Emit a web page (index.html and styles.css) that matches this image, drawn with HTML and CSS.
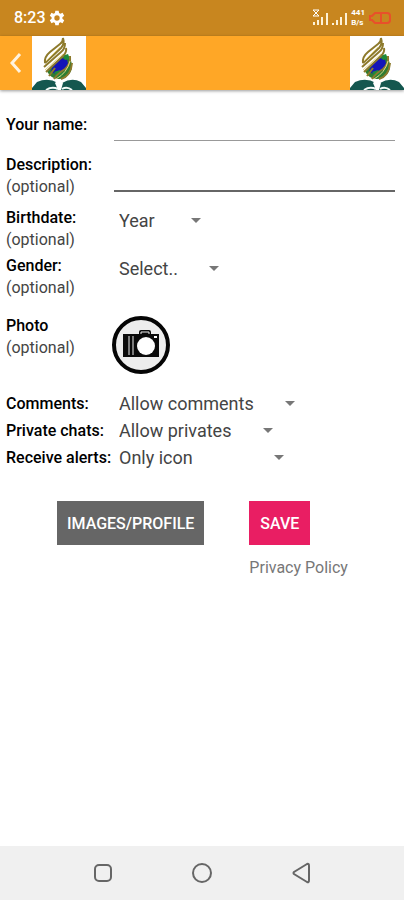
FILE: index.html
```html
<!DOCTYPE html>
<html lang="en">
<head>
    <meta charset="UTF-8">
    <meta name="viewport" content="width=device-width, initial-scale=1.0">
    <title>Profile</title>
    <link rel="stylesheet" href="styles.css">
</head>
<body>
<!-- shared logo, used on both sides of the app bar -->
<svg class="defs" width="0" height="0" aria-hidden="true">
    <symbol id="logo" viewBox="0 0 54 54">
        <rect width="54" height="54" fill="#fff"/>
        <path d="M0 52L5 46Q16 41 26 47L30 47Q40 41 49 46L54 52V54H0Z" fill="#14574f"/>
        <path d="M14 54Q20 50 26 53M40 54Q35 50 30 53" stroke="#f4faf8" stroke-width="2" fill="none"/>
        <path d="M23 47L27 43L31 47L29 54H26Z" fill="#fff"/>
        <circle cx="27" cy="30" r="13" fill="#2f7d32"/>
        <path d="M20 32L28 22L35 23L36 28L31 35L24 38L19 36Z" fill="#1414b8"/>
        <path d="M30 20L36 18L38 23L33 24ZM22 36L28 34L31 38L26 42Z" fill="#1f8a3a"/>
        <!-- flame stripes running over the globe -->
        <g fill="none" stroke="#fff" stroke-width="5">
            <path d="M13 27L31 10"/>
            <path d="M13 33L33 14"/>
        </g>
        <g fill="none" stroke="#8d7a2c" stroke-width="2">
            <path d="M13 27Q12 21 18 16L28 8Q31 6 31 2Q33 8 29 12L13 27"/>
            <path d="M12 31L29 16Q33 13 33 7"/>
            <path d="M14 36L31 20Q35 16 34 12"/>
            <path d="M17 40L23 32"/>
            <path d="M22 43Q25 38 33 33Q39 28 38 20"/>
            <path d="M29 43Q39 40 40 27"/>
        </g>
        <g fill="none" stroke="#e2d488" stroke-width="1">
            <path d="M14 25L28 11"/>
            <path d="M13 34L31 18"/>
            <path d="M24 43Q35 37 38 25"/>
        </g>
    </symbol>
</svg>

<div class="status-bar">
    <div class="clock">
        <span>8:23</span>
        <svg width="16" height="16" viewBox="0 0 24 24"><path fill="#fff" fill-rule="evenodd" d="M9.500 1h5l.6 3.400 2 1.100 3.200-1.200 2.500 4.300-2.700 2.200v2.400l2.700 2.200-2.500 4.300-3.200-1.200-2 1.100-.6 3.400h-5l-.6-3.400-2-1.100-3.200 1.200-2.500-4.300 2.700-2.200v-2.400L1.200 8.600l2.500-4.300 3.200 1.200 2-1.100zM12 8a4 4 0 1 0 0 8 4 4 0 0 0 0-8z"/></svg>
    </div>
    <div class="signals">
        <svg width="36" height="18" viewBox="0 0 36 18">
            <path d="M1 1L7 7M7 1L1 7M1 1H7M1 7H7" stroke="#fff" fill="none"/>
            <path d="M2 13V16M6 11V16M10 8V16M15 4V16M21 14V16M25 11V16M29 8V16M34 4V16" stroke="#fdf1d8" stroke-width="2"/>
        </svg>
        <div class="speed">
            <span>441</span>
            <span>B/s</span>
        </div>
        <svg width="24" height="14" viewBox="0 0 24 14">
            <path d="M7 2H19Q22 2 22 5V9Q22 12 19 12H7L4 9H2V5H4Z" fill="none" stroke="#e8502a" stroke-width="2"/>
            <path d="M13 2V12" stroke="#e8502a" stroke-width="2"/>
        </svg>
    </div>
</div>

<header class="app-bar">
    <button class="back-btn" type="button" aria-label="Back">
        <svg width="12" height="20" viewBox="0 0 12 20"><path d="M10 1L2 10L10 19" fill="none" stroke="#fff3df" stroke-width="3"/></svg>
    </button>
    <svg class="logo" aria-hidden="true"><use href="#logo"/></svg>
    <svg class="logo logo-right" aria-hidden="true"><use href="#logo"/></svg>
</header>

<main>
    <form>
        <div class="row row-text">
            <label for="name"><b>Your name:</b></label>
            <input type="text" id="name">
        </div>
        <div class="row row-text">
            <label for="description"><b>Description:</b><br>(optional)</label>
            <input type="text" id="description" class="active">
        </div>
        <div class="row">
            <label for="year"><b>Birthdate:</b><br>(optional)</label>
            <div class="select year">
                <select id="year"><option>Year</option></select>
            </div>
        </div>
        <div class="row">
            <label for="gender"><b>Gender:</b><br>(optional)</label>
            <div class="select gender">
                <select id="gender"><option>Select..</option></select>
            </div>
        </div>
        <div class="row row-photo">
            <label for="photo"><b>Photo</b><br>(optional)</label>
            <button class="photo-btn" id="photo" type="button">
                <svg width="60" height="60" viewBox="0 0 60 60">
                    <circle cx="30" cy="30" r="27" fill="#ededed" stroke="#050505" stroke-width="4"/>
                    <path d="M12 19H28V17Q28 15 30 15H38Q40 15 40 17V19H48V42H12Z" fill="#0b0b0b"/>
                    <path d="M30 19V17H38V19" stroke="#ededed" fill="none"/>
                    <path d="M18 21V40M22 21V40" stroke="#ededed"/>
                    <circle cx="35" cy="31" r="9" fill="#fff"/>
                    <path d="M43 22H46" stroke="#fff" stroke-width="2"/>
                </svg>
            </button>
        </div>
        <div class="row row-single">
            <label for="comments"><b>Comments:</b></label>
            <div class="select comments">
                <select id="comments"><option>Allow comments</option></select>
            </div>
        </div>
        <div class="row row-single">
            <label for="chats"><b>Private chats:</b></label>
            <div class="select chats">
                <select id="chats"><option>Allow privates</option></select>
            </div>
        </div>
        <div class="row row-single">
            <label for="alerts"><b>Receive alerts:</b></label>
            <div class="select alerts">
                <select id="alerts"><option>Only icon</option></select>
            </div>
        </div>
        <div class="actions">
            <button class="btn" type="button">IMAGES/PROFILE</button>
            <div class="save-col">
                <button class="btn save-btn" type="submit">SAVE</button>
                <a href="#">Privacy Policy</a>
            </div>
        </div>
    </form>
</main>

<nav class="nav-bar">
    <button type="button" aria-label="Recent apps">
        <svg width="22" height="22" viewBox="0 0 22 22"><rect x="3" y="3" width="16" height="16" rx="4"/></svg>
    </button>
    <button type="button" aria-label="Home">
        <svg width="22" height="22" viewBox="0 0 22 22"><circle cx="11" cy="11" r="9"/></svg>
    </button>
    <button type="button" aria-label="Go back">
        <svg width="22" height="22" viewBox="0 0 22 22"><path d="M17 2Q19 1 19 4V18Q19 21 17 20L4 12Q3 11 4 10Z"/></svg>
    </button>
</nav>
</body>
</html>
```
FILE: styles.css
```css
* {
    box-sizing: border-box;
}

body {
    margin: 0;
    min-height: 100vh;
    display: flex;
    flex-direction: column;
    font-family: Roboto, sans-serif;
    font-size: 16px;
    line-height: 22px;
    color: #444;
    background-color: #fff;
}

button {
    font-family: inherit;
    border: none;
    padding: 0;
    background: none;
    cursor: pointer;
}

svg {
    display: block;
}

.defs {
    position: absolute;
}

.status-bar {
    height: 36px;
    padding: 0 12px 0 14px;
    display: flex;
    align-items: center;
    justify-content: space-between;
    background-color: #c8861f;
    color: #fff;
}

.clock,
.signals {
    display: flex;
    align-items: center;
    gap: 3px;
}

.clock {
    font-weight: 500;
}

.speed {
    display: flex;
    flex-direction: column;
    font-size: 8px;
    line-height: 10px;
    font-weight: bold;
}

.app-bar {
    display: flex;
    background-color: #ffa726;
    box-shadow: 0 1px 3px rgba(0, 0, 0, 0.4);
}

.back-btn {
    width: 32px;
    padding-left: 10px;
}

.logo {
    width: 54px;
    height: 54px;
}

.logo-right {
    margin-left: auto;
}

main {
    flex: 1;
    padding: 24px 9px 24px 6px;
}

.row {
    display: grid;
    grid-template-columns: 108px 1fr;
    align-items: start;
    margin-bottom: 4px;
}

.row b {
    color: #000;
    font-weight: 500;
}

.row label {
    white-space: nowrap;
}

.row-text {
    margin-bottom: 9px;
}

.row input {
    width: 100%;
    height: 27px;
    border: none;
    border-bottom: 1px solid #999;
    font: inherit;
    background: none;
    outline: none;
}

.row input.active {
    height: 38px;
    border-bottom: 2px solid #666;
}

.row-text:first-child {
    margin-bottom: 13px;
}

/* drop-downs with their own small arrow */
.select {
    display: flex;
    align-items: center;
    height: 27px;
    padding-left: 5px;
}

.select::after {
    content: '';
    border-left: 5px solid transparent;
    border-right: 5px solid transparent;
    border-top: 5px solid #777;
    margin-left: -10px;
    pointer-events: none;
}

.select select {
    appearance: none;
    width: 100%;
    padding: 0;
    border: none;
    background: none;
    font-family: inherit;
    font-size: 18px;
    color: #444;
}

.year {
    width: 87px;
}

.gender {
    width: 105px;
}

.comments {
    width: 181px;
}

.chats {
    width: 159px;
}

.alerts {
    width: 170px;
}

.row-photo {
    margin: 16px 0 15px;
}

.photo-btn {
    width: 60px;
    margin-left: -3px;
}

.row-single {
    align-items: center;
    margin-bottom: 0;
}

.actions {
    display: flex;
    align-items: flex-start;
    gap: 45px;
    margin: 30px 0 0 51px;
}

.btn {
    height: 44px;
    padding: 0 10px;
    background-color: #666;
    color: #fff;
    font-size: 16px;
    font-weight: 500;
}

.save-btn {
    padding: 0 11px;
    background-color: #e91e63;
}

.save-col {
    display: flex;
    flex-direction: column;
    align-items: flex-start;
    gap: 12px;
}

.save-col a {
    color: #777;
    text-decoration: none;
}

.nav-bar {
    height: 54px;
    padding: 0 54px;
    display: flex;
    align-items: center;
    justify-content: space-around;
    background-color: #f0f0f0;
}

.nav-bar svg {
    fill: none;
    stroke: #666;
    stroke-width: 2;
}
```
